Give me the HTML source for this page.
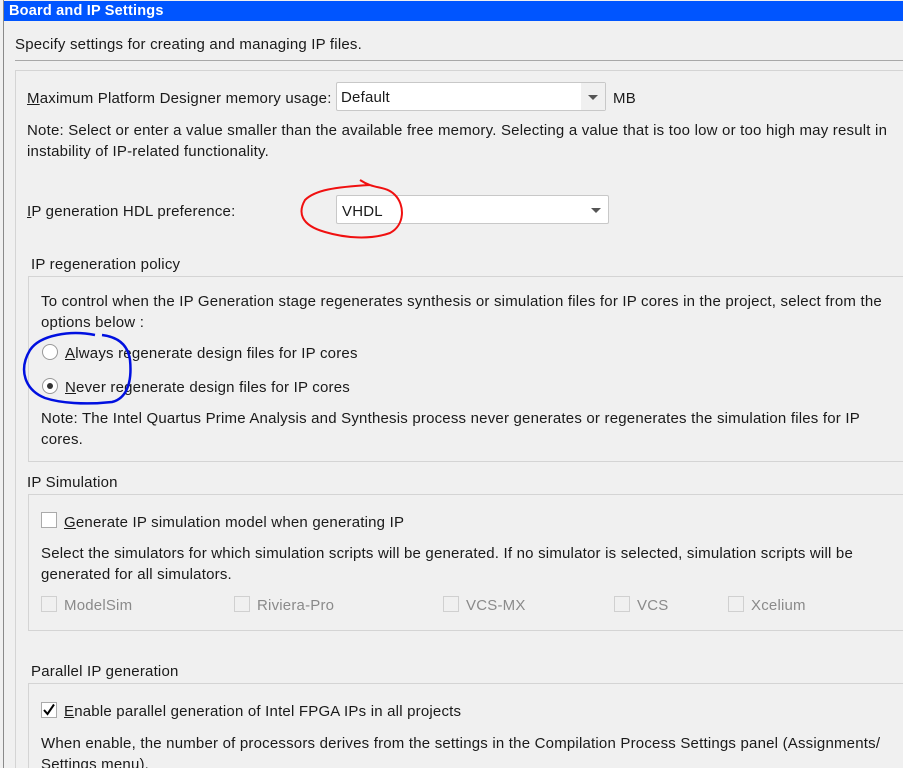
<!DOCTYPE html>
<html><head><meta charset="utf-8"><style>
*{margin:0;padding:0;box-sizing:border-box}
html{width:903px;height:768px;overflow:hidden}
body{width:903px;height:768px;overflow:hidden;background:#f0f0f0;font-family:"Liberation Sans","DejaVu Sans",sans-serif;font-size:15px;letter-spacing:0.2px;color:#1a1a1a;position:relative}
.a{position:absolute;white-space:nowrap}
.u{text-decoration:underline}
.box{position:absolute;border:1px solid #d4d4d4;border-right:none}
.cb{position:absolute;width:16px;height:16px;border:1px solid #aaa;background:#fff}
.cbd{position:absolute;width:16px;height:16px;border:1px solid #d0d0d0;background:#f0f0f0}
.g{color:#8a8a8a}
.sel{position:absolute;height:29px;border:1px solid #c8c8c8;border-radius:2px;background:#fff}
.arr{position:absolute;width:0;height:0;border-left:5px solid transparent;border-right:5px solid transparent;border-top:5px solid #555}
</style></head><body>
<div class="a" style="left:3px;top:0;width:1px;height:768px;background:#8a8a8a"></div>
<div class="a" style="left:4px;top:1px;width:899px;height:20px;background:#0055ff"></div>
<div class="a" style="left:9px;top:3px;color:#fff;font-weight:bold;font-size:14.5px;letter-spacing:0.2px">Board and IP Settings</div>
<div class="a" style="left:15px;top:36px">Specify settings for creating and managing IP files.</div>
<div class="a" style="left:15px;top:60px;width:888px;height:1px;background:#a8a8a8"></div>
<div class="box" style="left:15px;top:70px;width:888px;height:698px;border-bottom:none"></div>

<div class="a" style="left:27px;top:90px"><span class="u">M</span>aximum Platform Designer memory usage:</div>
<div class="sel" style="left:336px;top:82px;width:270px"><div class="a" style="left:4px;top:6px">Default</div><div class="a" style="right:0;top:0;width:24px;height:27px;background:#f0f0f0"></div><div class="arr" style="right:7px;top:12px"></div></div>
<div class="a" style="left:613px;top:90px">MB</div>
<div class="a" style="left:27px;top:122px">Note: Select or enter a value smaller than the available free memory. Selecting a value that is too low or too high may result in</div>
<div class="a" style="left:27px;top:143px">instability of IP-related functionality.</div>

<div class="a" style="left:27px;top:203px"><span class="u">I</span>P generation HDL preference:</div>
<div class="sel" style="left:336px;top:195px;width:273px"><div class="a" style="left:5px;top:7px">VHDL</div><div class="arr" style="right:7px;top:12px"></div></div>

<div class="a" style="left:31px;top:256px">IP regeneration policy</div>
<div class="box" style="left:28px;top:276px;width:875px;height:186px"></div>
<div class="a" style="left:41px;top:293px">To control when the IP Generation stage regenerates synthesis or simulation files for IP cores in the project, select from the</div>
<div class="a" style="left:41px;top:314px">options below :</div>
<div class="a" style="left:42px;top:344px;width:16px;height:16px;border:1px solid #999;border-radius:50%;background:#fff"></div>
<div class="a" style="left:65px;top:345px"><span class="u">A</span>lways regenerate design files for IP cores</div>
<div class="a" style="left:42px;top:378px;width:16px;height:16px;border:1px solid #999;border-radius:50%;background:#fff"><div class="a" style="left:4px;top:4px;width:6px;height:6px;border-radius:50%;background:#333"></div></div>
<div class="a" style="left:65px;top:379px"><span class="u">N</span>ever regenerate design files for IP cores</div>
<div class="a" style="left:41px;top:410px">Note: The Intel Quartus Prime Analysis and Synthesis process never generates or regenerates the simulation files for IP</div>
<div class="a" style="left:41px;top:431px">cores.</div>

<div class="a" style="left:27px;top:474px">IP Simulation</div>
<div class="box" style="left:28px;top:494px;width:875px;height:137px"></div>
<div class="cb" style="left:41px;top:512px"></div>
<div class="a" style="left:64px;top:514px"><span class="u">G</span>enerate IP simulation model when generating IP</div>
<div class="a" style="left:41px;top:545px">Select the simulators for which simulation scripts will be generated. If no simulator is selected, simulation scripts will be</div>
<div class="a" style="left:41px;top:566px">generated for all simulators.</div>
<div class="cbd" style="left:41px;top:596px"></div><div class="a g" style="left:64px;top:597px">ModelSim</div>
<div class="cbd" style="left:234px;top:596px"></div><div class="a g" style="left:257px;top:597px">Riviera-Pro</div>
<div class="cbd" style="left:443px;top:596px"></div><div class="a g" style="left:466px;top:597px">VCS-MX</div>
<div class="cbd" style="left:614px;top:596px"></div><div class="a g" style="left:637px;top:597px">VCS</div>
<div class="cbd" style="left:728px;top:596px"></div><div class="a g" style="left:751px;top:597px">Xcelium</div>

<div class="a" style="left:31px;top:663px">Parallel IP generation</div>
<div class="box" style="left:28px;top:683px;width:875px;height:85px;border-bottom:none"></div>
<div class="cb" style="left:41px;top:702px"><svg width="14" height="14" style="position:absolute;left:0;top:0"><path d="M2 7 L5.5 11 L12 1.5" stroke="#000" stroke-width="2" fill="none"/></svg></div>
<div class="a" style="left:64px;top:703px"><span class="u">E</span>nable parallel generation of Intel FPGA IPs in all projects</div>
<div class="a" style="left:41px;top:735px">When enable, the number of processors derives from the settings in the Compilation Process Settings panel (Assignments/</div>
<div class="a" style="left:41px;top:756px">Settings menu).</div>

<svg class="a" style="left:0;top:0" width="903" height="768">
<path d="M360 180 C375 190 385 185 395 195 C405 205 405 225 390 233 C370 240 345 238 325 232 C300 225 298 212 305 200 C315 190 335 187 370 185" stroke="#f01010" stroke-width="2" fill="none"/>
<path d="M95 335 C70 330 40 335 30 350 C18 370 25 390 45 398 C60 403 85 405 112 402 C128 398 132 380 130 360 C128 345 118 337 102 335" stroke="#0010e0" stroke-width="2.5" fill="none"/>
</svg>
</body></html>
